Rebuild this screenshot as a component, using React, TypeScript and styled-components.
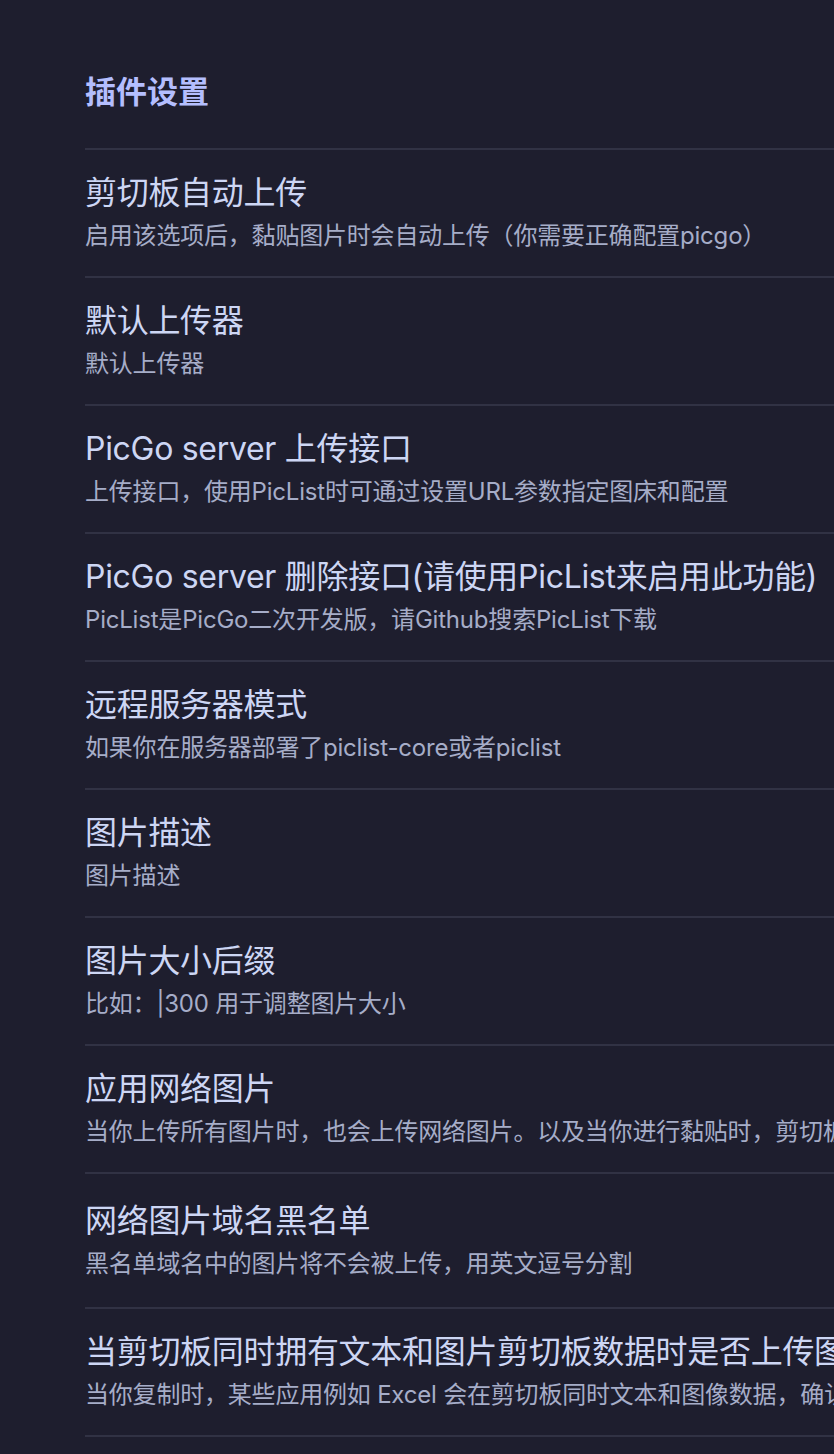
import React from "react";
import styled, { createGlobalStyle } from "styled-components";

const GlobalStyle = createGlobalStyle`
  html, body {
    margin: 0;
    padding: 0;
    background: #1e1e2e;
  }
  body {
    font-family: Inter, "Noto Sans CJK SC", sans-serif;
  }
`;

type Setting = {
  name: string;
  desc: string;
  tall?: boolean;
};

const settings: Setting[] = [
  { name: "剪切板自动上传", desc: "启用该选项后，黏贴图片时会自动上传（你需要正确配置picgo）" },
  { name: "默认上传器", desc: "默认上传器" },
  { name: "PicGo server 上传接口", desc: "上传接口，使用PicList时可通过设置URL参数指定图床和配置" },
  { name: "PicGo server 删除接口(请使用PicList来启用此功能)", desc: "PicList是PicGo二次开发版，请Github搜索PicList下载" },
  { name: "远程服务器模式", desc: "如果你在服务器部署了piclist-core或者piclist" },
  { name: "图片描述", desc: "图片描述" },
  { name: "图片大小后缀", desc: "比如：|300 用于调整图片大小" },
  { name: "应用网络图片", desc: "当你上传所有图片时，也会上传网络图片。以及当你进行黏贴时，剪切板中的标准 md 图片会被上传" },
  { name: "网络图片域名黑名单", desc: "黑名单域名中的图片将不会被上传，用英文逗号分割", tall: true },
  { name: "当剪切板同时拥有文本和图片剪切板数据时是否上传图片", desc: "当你复制时，某些应用例如 Excel 会在剪切板同时文本和图像数据，确认是否上传。" },
];

// the settings pane is wider than the window, long lines run off the right edge
const Page = styled.div`
  width: 834px;
  height: 1454px;
  overflow: hidden;
  padding-left: 85px;
  box-sizing: border-box;
`;

const Header = styled.div`
  height: 148px;
`;

const Heading = styled.h2`
  margin: 0;
  padding-top: 72px;
  font-size: 31px;
  line-height: 40px;
  font-weight: 700;
  color: #b4befe;
  white-space: nowrap;
`;

const Item = styled.div<{ $tall?: boolean }>`
  border-top: 2px solid #313244;
  height: ${(p) => (p.$tall ? 133 : 126)}px;
  display: flex;
  flex-direction: column;
  justify-content: center;
  width: 1400px;
`;

const LastRule = styled.div`
  border-top: 2px solid #313244;
  width: 1400px;
`;

const Name = styled.div`
  font-size: 32px;
  line-height: 40px;
  color: #cdd6f4;
  white-space: nowrap;
  letter-spacing: -0.3px;
`;

const Desc = styled.div`
  margin-top: 6px;
  font-size: 24px;
  line-height: 34px;
  color: #a6adc8;
  white-space: nowrap;
  letter-spacing: -0.2px;
`;

export default function App() {
  return (
    <Page>
      <GlobalStyle />
      <Header>
        <Heading>插件设置</Heading>
      </Header>
      {settings.map((s) => (
        <Item key={s.name} $tall={s.tall}>
          <Name>{s.name}</Name>
          <Desc>{s.desc}</Desc>
        </Item>
      ))}
      <LastRule />
    </Page>
  );
}
